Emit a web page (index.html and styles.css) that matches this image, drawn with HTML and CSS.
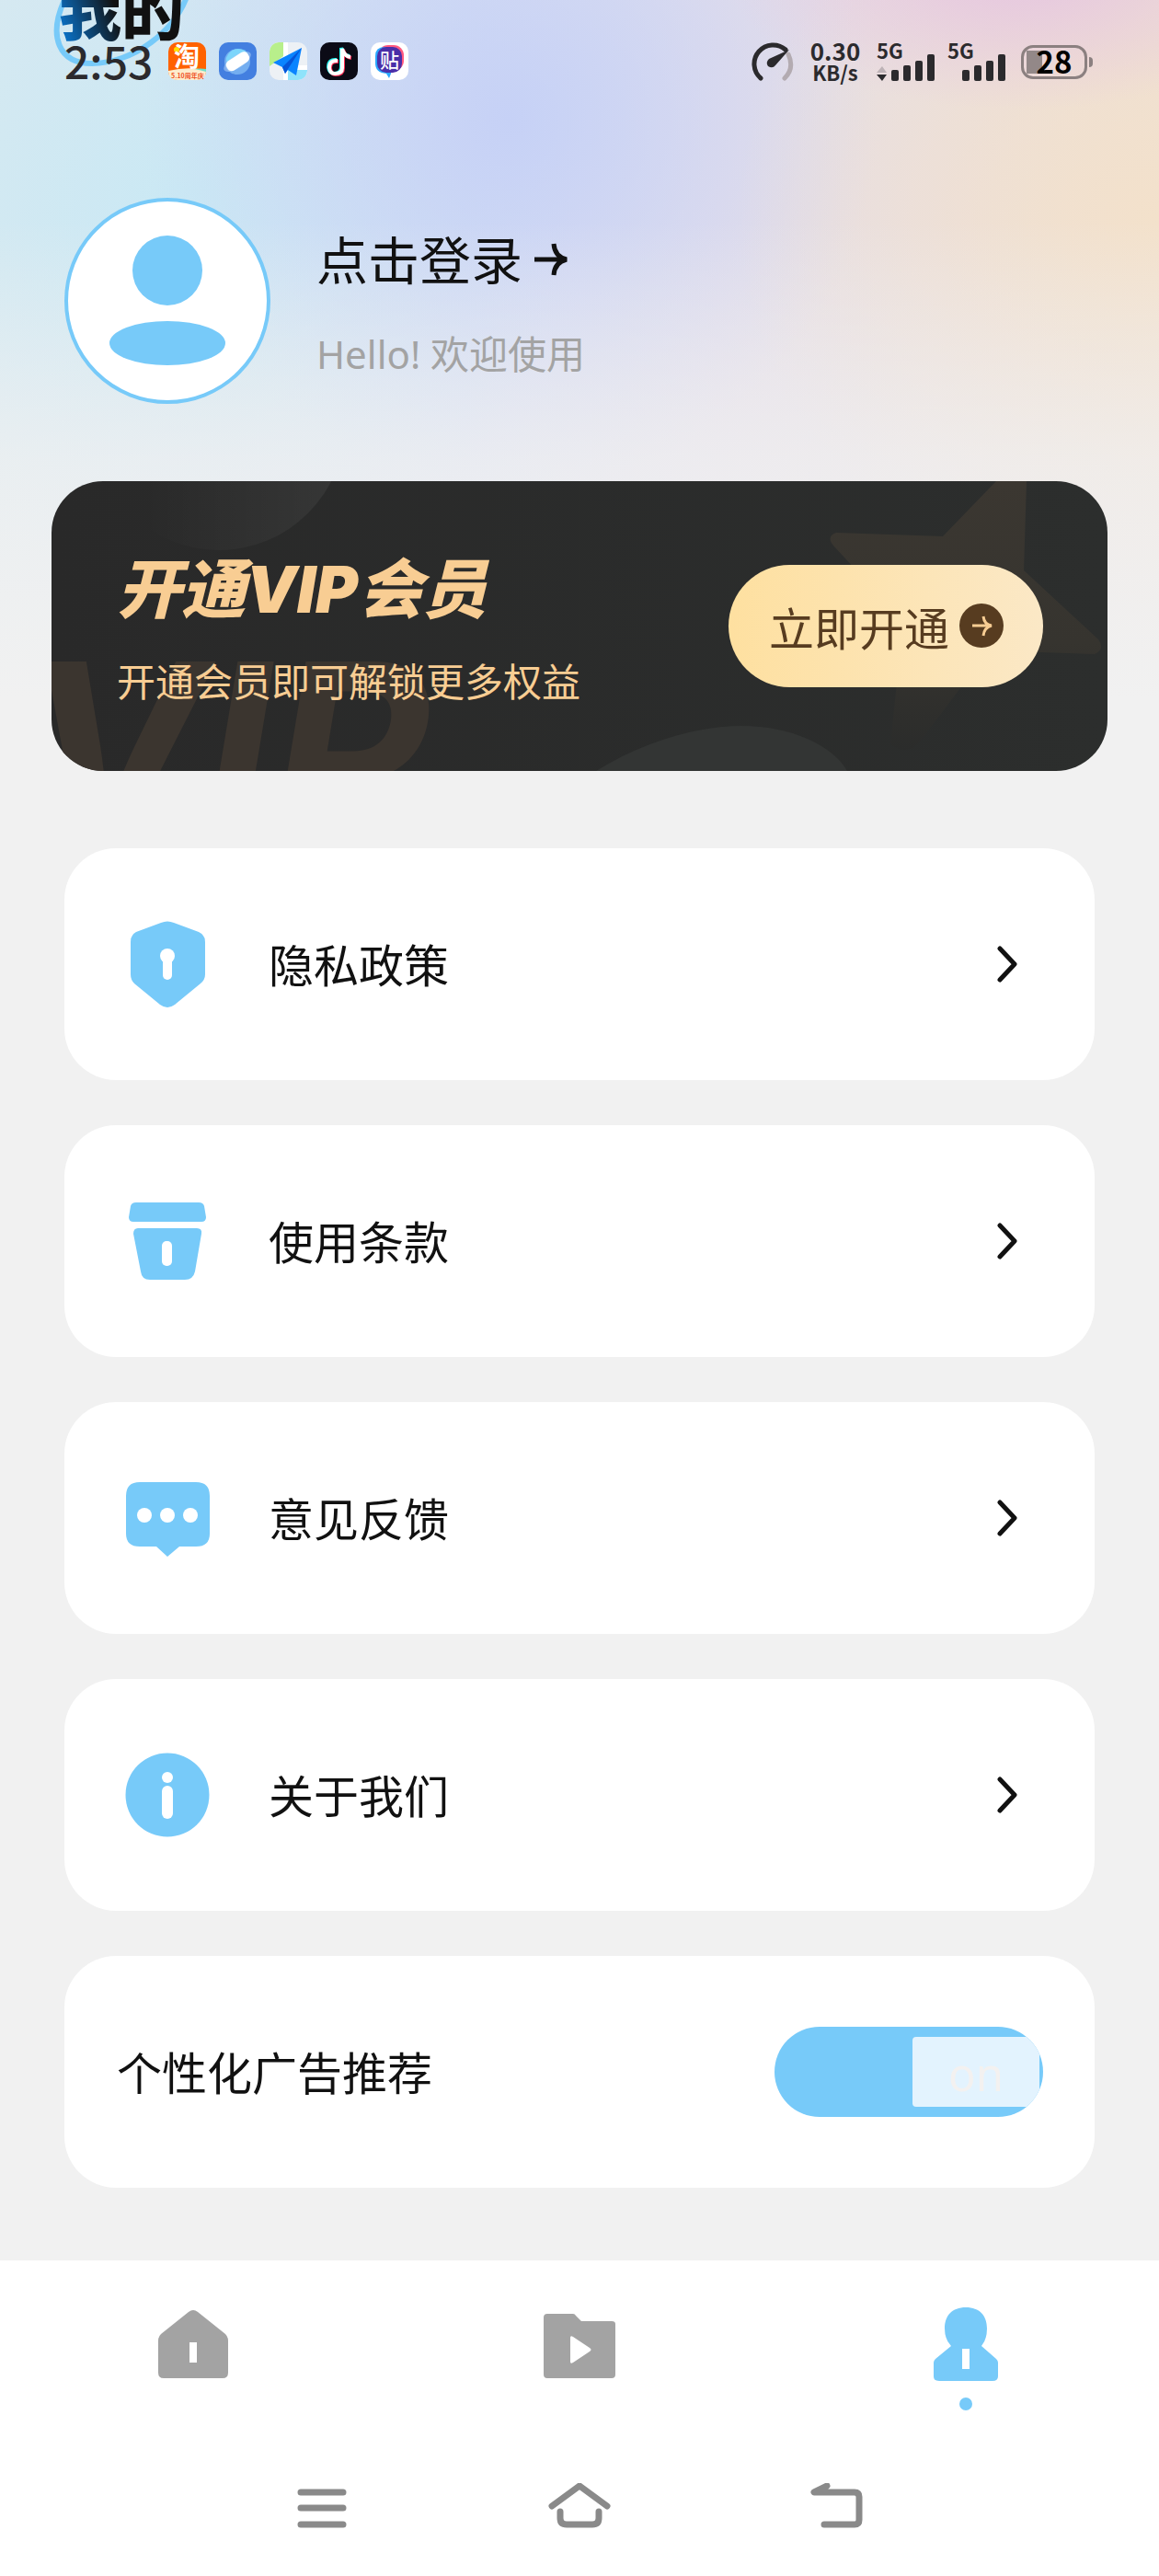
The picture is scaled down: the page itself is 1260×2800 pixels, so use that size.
FILE: index.html
```html
<!DOCTYPE html>
<html lang="zh-CN">
<head>
    <meta charset="UTF-8">
    <meta name="viewport" content="width=device-width, initial-scale=1.0">
    <title>我的</title>
    <link rel="stylesheet" href="styles.css">
</head>
<body>
    <!-- Page title, scrolled under the status bar -->
    <div class="page-title">
        <svg class="title-ring" width="160" height="120" viewBox="0 0 160 120" fill="none" stroke="#77caf9" stroke-width="6">
            <path d="M14 48C-4 88 8 117 44 117C86 117 138 84 151 32"/>
        </svg>
        <h1>我的</h1>
    </div>

    <!-- Status bar -->
    <header class="status-bar">
        <div class="status-left">
            <span class="clock">2:53</span>
            <svg class="app-icon" viewBox="0 0 41 41">
                <rect width="41" height="41" rx="10" fill="#ff6200"/>
                <path d="M0 31Q20 26 41 30V32Q40 41 31 41H10Q1 41 0 32Z" fill="#fdeccd"/>
                <path d="M28 29Q35 28 41 29V32Q34 30 28 29Z" fill="#6fe0c8"/>
                <circle cx="9" cy="8" r="3" fill="#ffdf00"/>
                <text class="tao" x="6" y="26">淘</text>
                <text class="sale" x="3" y="39">5.10周年庆</text>
            </svg>
            <svg class="app-icon" viewBox="0 0 41 41">
                <rect width="41" height="41" rx="10" fill="#437fe0"/>
                <circle cx="20" cy="21" r="14" fill="#74aef0"/>
                <path d="M8 17Q12 7 21 7Q29 7 32 13L12 24Q7 22 8 17Z" fill="#7cd5fb"/>
                <ellipse cx="20" cy="21" rx="17" ry="7" transform="rotate(-33 20 21)" fill="#a9cbf5" opacity=".6"/>
                <rect x="7" y="15" width="27" height="12" rx="5" transform="rotate(-33 20 21)" fill="#fff"/>
            </svg>
            <svg class="app-icon" viewBox="0 0 41 41">
                <rect width="41" height="41" rx="10" fill="#edf1f5"/>
                <path d="M0 26V10Q1 1 10 0H15V15Z" fill="#b8ef8b"/>
                <path d="M20 30H41V31Q40 40 31 41H20Z" fill="#8fe3fb"/>
                <path d="M15 0H20V41H15ZM20 25H41V30H20Z" fill="#fff"/>
                <path d="M35 6L4 22L14 27L17 34L20 30L29 36Z" fill="#0a84ff"/>
                <path d="M35 6L14 27L17 34L20 29Z" fill="#0555d8"/>
            </svg>
            <svg class="app-icon" viewBox="0 0 41 41" fill="none" stroke-width="4">
                <rect width="41" height="41" rx="10" fill="#0b0b16"/>
                <path d="M18 19Q9 18 9 27Q10 34 16 34Q23 33 23 27V6Q25 14 32 15" stroke="#25f4ee"/>
                <path d="M20 21Q11 20 11 28Q12 35 17 35Q25 35 25 28V8Q27 16 34 17" stroke="#fe2c55"/>
                <path d="M19 20Q10 19 10 28Q11 34 16 34Q24 34 24 28V7Q26 15 33 16" stroke="#fff" stroke-width="4"/>
            </svg>
            <svg class="app-icon" viewBox="0 0 41 41">
                <rect width="41" height="41" rx="10" fill="#fff"/>
                <rect x="8" y="3" width="28" height="28" rx="11" fill="#ff5a80"/>
                <path d="M5 15Q5 5 15 5H22V34L20 39L17 34Q5 33 5 23Z" fill="#2ba8ff"/>
                <rect x="7" y="5" width="27" height="28" rx="10" fill="#4a2fa8"/>
                <text class="tie" x="10" y="27">贴</text>
            </svg>
        </div>
        <div class="status-right">
            <svg width="46" height="42" viewBox="0 0 46 42" fill="none" stroke-width="5" stroke-linecap="round">
                <path d="M40 13Q47 28 36 39" stroke="#b3abb1"/>
                <path d="M10 39A20.500 20.500 0 1 1 37 8" stroke="#2b2a2d"/>
                <path d="M41 8L19 18Q15 22 18 26Q23 29 26 25Z" fill="#2b2a2d"/>
            </svg>
            <div class="speed">
                <span class="speed-value">0.30</span>
                <span class="speed-unit">KB/s</span>
            </div>
            <div class="signal">
                <span>5G</span>
                <svg width="64" height="30" viewBox="0 0 64 30" fill="#2b2a2d">
                    <path d="M0 21L6 14L11 21Z" fill="#bdb2b6"/>
                    <path d="M0 23H11L6 30Z"/>
                    <rect x="16" y="18" width="8" height="12" rx="2"/>
                    <rect x="29" y="13" width="8" height="17" rx="2"/>
                    <rect x="42" y="8" width="8" height="22" rx="2"/>
                    <rect x="55" y="1" width="8" height="29" rx="2"/>
                </svg>
            </div>
            <div class="signal">
                <span>5G</span>
                <svg width="64" height="30" viewBox="0 0 64 30" fill="#2b2a2d">
                    <rect x="16" y="18" width="8" height="12" rx="2"/>
                    <rect x="29" y="13" width="8" height="17" rx="2"/>
                    <rect x="42" y="8" width="8" height="22" rx="2"/>
                    <rect x="55" y="1" width="8" height="29" rx="2"/>
                </svg>
            </div>
            <div class="battery">28</div>
        </div>
    </header>

    <main>
        <!-- Profile -->
        <section class="profile">
            <svg class="avatar" viewBox="0 0 224 224">
                <circle cx="112" cy="112" r="110" fill="#fff" stroke="#77caf9" stroke-width="4"/>
                <circle cx="112" cy="79" r="38" fill="#77caf9"/>
                <ellipse cx="112" cy="158" rx="63" ry="24" fill="#77caf9"/>
            </svg>
            <div class="profile-text">
                <a class="login" href="#login">点击登录
                    <svg width="36" height="36" viewBox="0 0 36 36" fill="none" stroke="#111" stroke-width="5">
                        <path d="M0 18H34M21 1Q22 15 35 18Q22 21 21 35"/>
                    </svg>
                </a>
                <p class="welcome">Hello! 欢迎使用</p>
            </div>
        </section>

        <!-- VIP banner -->
        <section class="vip">
            <svg class="vip-bg" viewBox="0 0 1148 315" preserveAspectRatio="xMidYMid slice">
                <defs>
                    <linearGradient id="orb" x1="0" y1="0" x2="1" y2="0">
                        <stop offset=".2" stop-color="#fff" stop-opacity="0"/>
                        <stop offset="1" stop-color="#fff" stop-opacity=".06"/>
                    </linearGradient>
                    <linearGradient id="star" x1="0" y1="0" x2="0" y2="1">
                        <stop offset="0" stop-color="#3b3731"/>
                        <stop offset=".6" stop-color="#36342f"/>
                        <stop offset="1" stop-color="#2b2c2b"/>
                    </linearGradient>
                </defs>
                <circle cx="182" cy="-62" r="137" fill="url(#orb)"/>
                <path d="M592 315C644 282 704 266 750 266C804 266 849 287 865 315Z" fill="#333534"/>
                <path d="M1027 0L969 60L853 56Q842 60 850 70L926 152L912 286Q930 300 945 282L1019 184L1134 188Q1146 183 1138 172L1057 97L1060 0Z" fill="url(#star)"/>
                <text class="vip-mark" x="-32" y="388">VIP</text>
            </svg>
            <div class="vip-text">
                <h2>开通<span>VIP</span>会员</h2>
                <p>开通会员即可解锁更多权益</p>
            </div>
            <button class="vip-button" type="button">立即开通
                <svg width="49" height="49" viewBox="0 0 49 49" fill="none" stroke="#f8cd93" stroke-width="3">
                    <circle cx="24" cy="24" r="24" fill="#573c20" stroke="none"/>
                    <path d="M14 24H34M26 14Q27 23 35 24Q27 26 26 35"/>
                </svg>
            </button>
        </section>

        <!-- Menu -->
        <nav class="menu">
            <a class="card" href="#privacy">
                <svg class="card-icon" viewBox="0 0 96 96">
                    <path fill="#77caf9" d="M41 3Q48 0 55 3L82 13Q89 16 89 24V59Q89 65 84 69L56 92Q48 98 40 92L12 69Q8 65 8 59V24Q8 16 14 13Z"/>
                    <circle cx="48" cy="39" r="8" fill="#fff"/>
                    <rect x="43" y="39" width="10" height="26" rx="5" fill="#fff"/>
                </svg>
                <span>隐私政策</span>
                <svg class="chevron" viewBox="0 0 24 40"><path d="M4 3L20 20L4 37"/></svg>
            </a>
            <a class="card" href="#terms">
                <svg class="card-icon" viewBox="0 0 96 96">
                    <path fill="#77caf9" d="M14 6H82Q87 6 88 10L90 22Q90 27 85 27H11Q6 27 6 22L8 10Q9 6 14 6ZM16 34H80Q86 34 85 40L78 81Q76 90 67 90H29Q20 90 19 81L11 40Q11 34 16 34Z"/>
                    <rect x="42" y="48" width="11" height="27" rx="5" fill="#fff"/>
                </svg>
                <span>使用条款</span>
                <svg class="chevron" viewBox="0 0 24 40"><path d="M4 3L20 20L4 37"/></svg>
            </a>
            <a class="card" href="#feedback">
                <svg class="card-icon" viewBox="0 0 96 96">
                    <path fill="#77caf9" d="M18 9H79Q94 9 94 24V65Q94 79 79 79H61L48 90L36 79H18Q3 79 3 65V24Q3 9 18 9Z"/>
                    <g fill="#fff">
                        <circle cx="23" cy="45" r="8"/>
                        <circle cx="48" cy="45" r="8"/>
                        <circle cx="73" cy="45" r="8"/>
                    </g>
                </svg>
                <span>意见反馈</span>
                <svg class="chevron" viewBox="0 0 24 40"><path d="M4 3L20 20L4 37"/></svg>
            </a>
            <a class="card" href="#about">
                <svg class="card-icon" viewBox="0 0 96 96">
                    <circle cx="48" cy="48" r="45.500" fill="#77caf9"/>
                    <circle cx="48" cy="29" r="6" fill="#fff"/>
                    <rect x="42" y="38" width="12" height="36" rx="6" fill="#fff"/>
                </svg>
                <span>关于我们</span>
                <svg class="chevron" viewBox="0 0 24 40"><path d="M4 3L20 20L4 37"/></svg>
            </a>
            <div class="card">
                <label for="adSwitch">个性化广告推荐</label>
                <div class="switch">
                    <input type="checkbox" id="adSwitch" checked>
                    <span class="switch-knob">on</span>
                </div>
            </div>
        </nav>
    </main>

    <!-- Bottom tabs -->
    <footer class="bottom">
        <nav class="tabs">
            <a class="tab" href="#home" aria-label="首页">
                <svg width="80" height="80" viewBox="0 0 80 80">
                    <path fill="#a3a3a3" d="M35 5Q40 1 45 5L75 29Q78 32 78 36V71Q78 77 72 77H8Q2 77 2 71V36Q2 32 5 29Z"/>
                    <rect x="36" y="38" width="8" height="22" fill="#fff"/>
                </svg>
            </a>
            <a class="tab" href="#video" aria-label="视频">
                <svg width="80" height="80" viewBox="0 0 80 80">
                    <path fill="#a3a3a3" d="M5 7H33Q35 7 36 9L42 15H75Q79 15 79 18V73Q79 77 75 77H5Q1 77 1 73V11Q1 7 5 7Z"/>
                    <path fill="#fff" d="M30 33Q30 30 33 32L51 44Q54 46 51 48L33 60Q30 62 30 59Z"/>
                </svg>
            </a>
            <a class="tab active" href="#me" aria-label="我的">
                <svg width="80" height="80" viewBox="0 0 80 80">
                    <path fill="#77caf9" d="M40 0C55 0 63 9 63 23Q63 35 57 42L73 56Q75 58 75 60V75Q75 80 69 80H11Q5 80 5 75V60Q5 58 7 56L24 42Q17 35 17 23C17 9 25 0 40 0Z"/>
                    <rect x="36" y="45" width="8" height="22" fill="#fff"/>
                </svg>
            </a>
        </nav>
        <div class="system-bar">
            <button type="button" aria-label="最近任务">
                <svg width="68" height="52" viewBox="0 0 68 52"><path d="M11 10H57M11 27H57M11 45H57"/></svg>
            </button>
            <button type="button" aria-label="主屏幕">
                <svg width="68" height="52" viewBox="0 0 68 52"><path d="M4 25L34 3L64 25M13 31V38Q13 45 20 45H48Q55 45 55 38V31"/></svg>
            </button>
            <button type="button" aria-label="返回">
                <svg width="68" height="52" viewBox="0 0 68 52"><path d="M23 3L9 10H53Q58 10 58 15V40Q58 45 53 45H20"/></svg>
            </button>
        </div>
    </footer>
</body>
</html>
```
FILE: styles.css
```css
* {
    margin: 0;
    padding: 0;
    box-sizing: border-box;
}
body {
    min-height: 100vh;
    display: flex;
    flex-direction: column;
    font-family: "Noto Sans", "Noto Sans CJK SC", sans-serif;
    color: #111;
    background:
        linear-gradient(to bottom, rgba(241, 241, 241, 0) 240px, rgba(241, 241, 241, 0.7) 500px, #f1f1f1 760px),
        radial-gradient(ellipse 320px 150px at 88% -30px, #e6c6e0, rgba(230, 198, 224, 0)),
        radial-gradient(ellipse 460px 420px at 100% 240px, #f3e1cb, rgba(243, 225, 203, 0)),
        radial-gradient(ellipse 400px 400px at 44% 130px, #c6d1f6, rgba(198, 209, 246, 0)),
        radial-gradient(ellipse 420px 420px at 16% 220px, #cae9f4, rgba(202, 233, 244, 0)),
        linear-gradient(to right, #dae9f0, #d9e0f2 40%, #e4deea 62%, #ecdfd8);
    background-color: #f1f1f1;
}
a {
    color: inherit;
    text-decoration: none;
}
svg {
    display: block;
    flex-shrink: 0;
}
button {
    border: none;
    background: none;
    font-family: inherit;
    cursor: pointer;
}

/* Title behind the status bar */
.page-title {
    position: absolute;
    top: -48px;
    left: 56px;
}
.title-ring {
    position: absolute;
    top: 0;
    left: 0;
}
.page-title h1 {
    position: relative;
    margin-left: 8px;
    padding-top: 20px;
    font-size: 68px;
    line-height: 80px;
    font-weight: 900;
    background: linear-gradient(70deg, #0a7fe0, #111 45%);
    -webkit-background-clip: text;
    background-clip: text;
    color: transparent;
}

/* Status bar */
.status-bar {
    position: relative;
    display: flex;
    justify-content: space-between;
    padding: 46px 78px 0 70px;
    color: #2b2a2d;
    font-family: "Noto Sans CJK SC", sans-serif;
}
.status-left, .status-right {
    display: flex;
    align-items: center;
    height: 42px;
}
.status-left {
    align-items: flex-start;
    gap: 14px;
}
.clock {
    width: 99px;
    font-size: 48px;
    line-height: 38px;
    font-weight: 500;
}
.app-icon {
    width: 41px;
    height: 41px;
}
.tao {
    font-size: 28px;
    font-weight: 700;
    fill: #fff;
}
.sale {
    font-size: 7px;
    font-weight: 700;
    fill: #f0501e;
}
.tie {
    font-size: 21px;
    font-weight: 500;
    fill: #fff;
}
.speed {
    width: 58px;
    margin: 0 16px;
    display: flex;
    flex-direction: column;
    align-items: center;
    font-weight: 700;
}
.speed-value {
    font-size: 26px;
    line-height: 22px;
}
.speed-unit {
    font-size: 22px;
    line-height: 24px;
}
.signal {
    height: 42px;
    margin-right: 13px;
}
.signal span {
    display: block;
    height: 12px;
    font-size: 22px;
    line-height: 16px;
    font-weight: 700;
}
.battery {
    position: relative;
    width: 72px;
    height: 37px;
    margin-left: 3px;
    border: 3px solid #8b8080;
    border-radius: 13px;
    background: linear-gradient(#938888, #938888) 3px center / 17px 25px no-repeat;
    color: #000;
    font-size: 33px;
    line-height: 28px;
    font-weight: 700;
    text-align: center;
}
.battery::after {
    content: "";
    position: absolute;
    top: 10px;
    right: -9px;
    width: 4px;
    height: 11px;
    border-radius: 0 4px 4px 0;
    background: #8b8080;
}

/* Profile */
.profile {
    display: flex;
    align-items: center;
    gap: 50px;
    padding: 127px 70px 84px;
}
.avatar {
    width: 224px;
    height: 224px;
}
.profile-text {
    display: flex;
    flex-direction: column;
    gap: 47px;
    padding-top: 5px;
}
.login {
    display: flex;
    align-items: center;
    gap: 13px;
    font-size: 56px;
    line-height: 64px;
}
.welcome {
    font-size: 42px;
    line-height: 48px;
    color: #a3a3a3;
}

/* VIP banner */
.vip {
    position: relative;
    display: flex;
    align-items: center;
    justify-content: space-between;
    min-height: 315px;
    margin: 0 56px;
    padding: 0 70px 0 71px;
    border-radius: 56px;
    overflow: hidden;
    background: linear-gradient(to right, #292929, #2c2e2d);
}
.vip-bg {
    position: absolute;
    top: 0;
    left: 0;
    width: 100%;
    height: 100%;
}
.vip-mark {
    font-family: Inter, sans-serif;
    font-size: 264px;
    font-weight: 700;
    font-style: italic;
    fill: #3b352f;
}
.vip-text {
    position: relative;
    display: flex;
    flex-direction: column;
    gap: 32px;
    padding-top: 6px;
    color: #f8cd93;
}
.vip-text h2 {
    font-size: 70px;
    line-height: 80px;
    font-weight: 900;
    font-style: italic;
}
.vip-text h2 span {
    font-family: Inter, sans-serif;
}
.vip-text p {
    font-size: 42px;
    line-height: 56px;
}
.vip-button {
    position: relative;
    display: flex;
    align-items: center;
    gap: 11px;
    height: 133px;
    padding: 0 42px 0 44px;
    border-radius: 67px;
    background: linear-gradient(to right, #fee0a0, #fbe8c6);
    color: #573c20;
    font-size: 49px;
}

/* Menu */
.menu {
    display: flex;
    flex-direction: column;
    gap: 49px;
    padding: 84px 70px 49px;
}
.card {
    display: flex;
    align-items: center;
    height: 252px;
    padding: 0 56px 0 64px;
    border-radius: 56px;
    background: #fff;
    font-size: 49px;
}
.card span, .card label {
    padding-bottom: 4px;
}
.card-icon {
    width: 96px;
    height: 96px;
    margin-right: 62px;
}
.chevron {
    width: 24px;
    height: 40px;
    margin-left: auto;
    margin-right: 27px;
    fill: none;
    stroke: #111;
    stroke-width: 5px;
    stroke-linecap: round;
    stroke-linejoin: round;
}
.card label {
    margin-left: -7px;
}
.switch {
    position: relative;
    display: flex;
    align-items: center;
    justify-content: flex-end;
    width: 292px;
    height: 98px;
    margin-left: auto;
    padding-right: 4px;
    border-radius: 49px;
    overflow: hidden;
    background: #77caf9;
}
.switch input {
    position: absolute;
    top: 0;
    left: 0;
    width: 100%;
    height: 100%;
    appearance: none;
    cursor: pointer;
}
.switch .switch-knob {
    position: relative;
    width: 138px;
    height: 76px;
    padding-bottom: 0;
    border-radius: 4px;
    background: #e3f3fe;
    color: #f3f1f0;
    line-height: 80px;
    text-align: center;
    pointer-events: none;
}

/* Bottom tabs and system bar */
.bottom {
    margin-top: auto;
    background: #fff;
}
.tabs {
    display: flex;
    height: 183px;
    padding-top: 51px;
}
.tab {
    flex: 1;
    display: flex;
    flex-direction: column;
    align-items: center;
    gap: 18px;
}
.tab.active::after {
    content: "";
    width: 14px;
    height: 14px;
    border-radius: 50%;
    background: #77caf9;
}
.system-bar {
    display: flex;
    height: 160px;
    padding: 0 calc(100% / 6);
}
.system-bar button {
    flex: 1;
    display: flex;
    align-items: center;
    justify-content: center;
}
.system-bar svg {
    margin-top: 10px;
    fill: none;
    stroke: #8a8a8a;
    stroke-width: 7px;
    stroke-linecap: round;
    stroke-linejoin: round;
}
```
